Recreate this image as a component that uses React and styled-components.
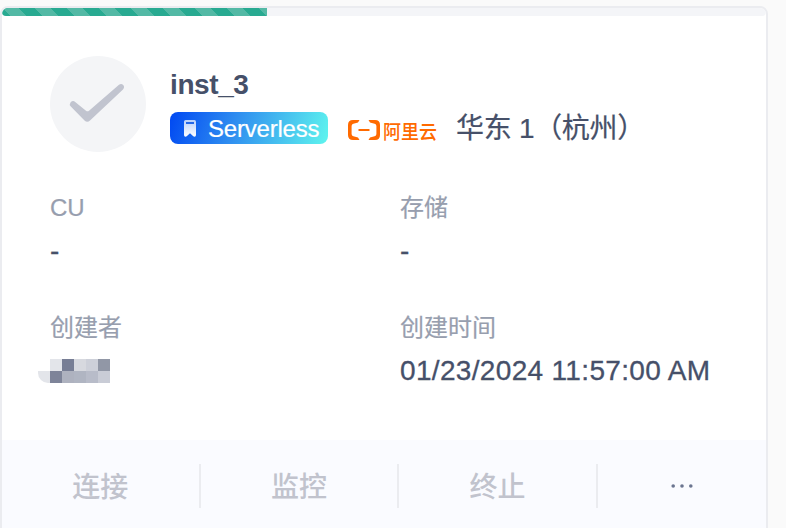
import React from 'react';
import styled, { createGlobalStyle } from 'styled-components';

const GlobalStyle = createGlobalStyle`
  * { box-sizing: border-box; }
  html, body { margin: 0; height: 528px; overflow: hidden; background: #fafafa; }
  body {
    font-family: "Liberation Sans", "Noto Sans CJK SC", sans-serif;
    color: #465069;
  }
`;

const Page = styled.main`
  height: 528px;
  padding-top: 6px;
  overflow: hidden;
`;

const Card = styled.article`
  display: flex;
  flex-direction: column;
  width: 768px;
  height: 540px;
  border: 2px solid #ebecf0;
  border-radius: 8px;
  background: #fff;
  overflow: hidden;
`;

const Track = styled.div`
  height: 8px;
  flex: none;
  background: #f4f5f8;
  border-radius: 4px;
  overflow: hidden;
`;

const Progress = styled.div`
  width: 265px;
  height: 8px;
  background-color: #28aa91;
  background-image: linear-gradient(45deg, #53b9a5 25%, transparent 25%, transparent 50%, #53b9a5 50%, #53b9a5 75%, transparent 75%);
  background-size: 32px 32px;
`;

const Body = styled.div`
  height: 424px;
  flex: none;
  padding: 40px 48px 0;
`;

const Header = styled.header`
  display: flex;
  gap: 24px;
  height: 96px;
`;

const StatusIcon = styled.div`
  width: 96px;
  height: 96px;
  border-radius: 50%;
  background: #f4f5f7;
  svg { display: block; }
`;

const Identity = styled.div`
  padding-top: 9px;
`;

const Title = styled.h1`
  margin: 0;
  height: 47px;
  font-size: 28px;
  line-height: 40px;
  font-weight: 700;
  letter-spacing: -0.4px;
`;

const Meta = styled.div`
  display: flex;
  align-items: center;
  height: 32px;
`;

const Badge = styled.span`
  display: flex;
  align-items: center;
  width: 158px;
  height: 32px;
  padding-left: 13px;
  border-radius: 8px;
  background: linear-gradient(108deg, #0048f2 0%, #2e8cf0 40%, #5ff5ee 100%);
  color: #fff;
  font-size: 24px;
  line-height: 32px;
  letter-spacing: -0.2px;
  -webkit-text-stroke: 0.2px currentColor;
  svg { flex: none; margin-right: 11px; }
  span { padding-top: 2px; }
`;

const Provider = styled.span`
  display: flex;
  align-items: center;
  margin-left: 20px;
  width: 108px;
  padding-top: 3px;
  color: #ff6a00;
  font: 500 18px/24px "Noto Sans CJK SC", sans-serif;
  svg { flex: none; margin-right: 3px; }
  span { transform: scaleY(1.1); }
`;

const Region = styled.span`
  padding-top: 2px;
  font-size: 28px;
  line-height: 32px;
  letter-spacing: -0.3px;
  white-space: pre;
  -webkit-text-stroke: 0.2px currentColor;
`;

const Fields = styled.dl`
  display: grid;
  grid-template-columns: 350px 1fr;
  grid-auto-rows: 120px;
  margin: 36px 0 0;
`;

const Label = styled.dt`
  height: 40px;
  font-size: 24px;
  line-height: 40px;
  color: #979eae;
  -webkit-text-stroke: 0.2px currentColor;
`;

const Value = styled.dd`
  margin: 0;
  padding-top: 3px;
  font-size: 28px;
  line-height: 40px;
  letter-spacing: 0.33px;
  white-space: nowrap;
  -webkit-text-stroke: 0.3px currentColor;
`;

const Mosaic = styled.div`
  display: grid;
  grid-template-columns: repeat(6, 12px);
  grid-auto-rows: 12px;
  width: 72px;
  margin: 8px 0 0 -12px;
  border-bottom-left-radius: 10px;
  overflow: hidden;
`;

const Tile = styled.span`
  background: ${(p) => p.$tone};
`;

const Footer = styled.footer`
  display: flex;
  flex: 1;
  padding-top: 24px;
  background: #fafbff;
`;

const Action = styled.button`
  display: flex;
  align-items: center;
  justify-content: center;
  width: ${(p) => (p.$last ? '168px' : '198.6px')};
  height: 44px;
  padding: ${(p) => (p.$last ? '0' : '0 0 2px')};
  border: 0;
  border-right: ${(p) => (p.$last ? '0' : '2px solid #ebecf0')};
  background: none;
  color: ${(p) => (p.$last ? '#6b7590' : '#c1c3cd')};
  font: 500 28px/42px "Noto Sans CJK SC", sans-serif;
`;

const tones = [
  '#e3e5ea', '#777e95', '#d7d9df', '#cdd0d9', '#9197a6',
  '#e3e5ea', '#7e8499', '#aeb2bf', '#b0b5c2', '#b8bcc9', '#c9ccd6',
];

function CheckIcon() {
  return (
    <svg width="96" height="96" viewBox="0 0 96 96" aria-hidden="true">
      <path
        d="M20.5 46.5Q22.8 44 25.2 46L36 54.7Q37.5 55.8 39 54.7L69 28.7Q71.3 27 73.2 29Q75 31.2 73 33.4L40 64.5Q37.3 67.2 34.5 64.5L20.8 50.5Q19 48.5 20.5 46.5Z"
        fill="#c1c4cf"
      />
    </svg>
  );
}

function BookmarkIcon() {
  return (
    <svg width="14" height="18" viewBox="0 0 14 18" aria-hidden="true">
      <defs>
        <linearGradient id="bookmark" x2="0" y2="1">
          <stop stopColor="#b8d0fb" />
          <stop offset="1" stopColor="#fff" />
        </linearGradient>
      </defs>
      <path d="M2.6 1H11.4Q13 1 13 2.8V16Q13 17.7 11.5 17.7Q10.7 17.7 10 17L7 14.3L4 17Q3.3 17.7 2.5 17.7Q1 17.7 1 16V2.8Q1 1 2.6 1Z" fill="url(#bookmark)" />
      <path d="M3 4H11" stroke="#2468e8" strokeWidth="1.8" />
    </svg>
  );
}

function CloudMark() {
  return (
    <svg width="32" height="20" viewBox="0 0 32 20" fill="#ff6a00" aria-hidden="true">
      <path d="M11.5 0H5Q0 0 0 5V15Q0 20 5 20H11.5L10 17.4L5.4 16.3Q3.6 15.7 3.6 14V6Q3.6 4.3 5.4 3.7L10 2.6Z" />
      <path d="M20.5 0H27Q32 0 32 5V15Q32 20 27 20H20.5L22 17.4L26.6 16.3Q28.4 15.7 28.4 14V6Q28.4 4.3 26.6 3.7L22 2.6Z" />
      <path d="M10.5 9H21.5V11H10.5Z" />
    </svg>
  );
}

function MoreIcon() {
  return (
    <svg width="24" height="6" viewBox="0 0 24 6" fill="currentColor" aria-hidden="true">
      <circle cx="3.2" cy="3" r="1.8" />
      <circle cx="12" cy="3" r="1.8" />
      <circle cx="20.8" cy="3" r="1.8" />
    </svg>
  );
}

function Field({ label, children }) {
  return (
    <div>
      <Label>{label}</Label>
      <Value>{children}</Value>
    </div>
  );
}

export default function App() {
  return (
    <Page>
      <GlobalStyle />
      <Card>
        <Track><Progress /></Track>
        <Body>
          <Header>
            <StatusIcon><CheckIcon /></StatusIcon>
            <Identity>
              <Title>inst_3</Title>
              <Meta>
                <Badge><BookmarkIcon /><span>Serverless</span></Badge>
                <Provider><CloudMark /><span>阿里云</span></Provider>
                <Region>华东 1（杭州）</Region>
              </Meta>
            </Identity>
          </Header>
          <Fields>
            <Field label="CU">-</Field>
            <Field label="存储">-</Field>
            <Field label="创建者">
              <Mosaic>
                <Tile $tone="#ffffff" />
                {tones.map((tone, i) => <Tile key={i} $tone={tone} />)}
              </Mosaic>
            </Field>
            <Field label="创建时间">01/23/2024 11:57:00 AM</Field>
          </Fields>
        </Body>
        <Footer>
          <Action>连接</Action>
          <Action>监控</Action>
          <Action>终止</Action>
          <Action $last aria-label="更多"><MoreIcon /></Action>
        </Footer>
      </Card>
    </Page>
  );
}
